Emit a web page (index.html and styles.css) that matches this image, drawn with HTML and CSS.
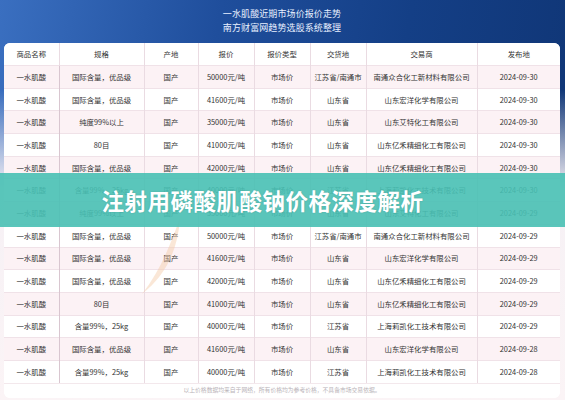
FILE: index.html
```html
<!DOCTYPE html>
<html lang="zh">
<head>
<meta charset="utf-8">
<link rel="stylesheet" href="styles.css">
</head>
<body>
<div class="page">
  <div class="title">
    <div>一水肌酸近期市场价报价走势</div>
    <div>南方财富网趋势选股系统整理</div>
  </div>
  <div class="card">
    <table class="grid">
      <colgroup>
        <col style="width:55px"><col style="width:85px"><col style="width:54px"><col style="width:56px"><col style="width:56px"><col style="width:56px"><col style="width:111px"><col style="width:83px">
      </colgroup>
      <thead>
        <tr><th>商品名称</th><th>规格</th><th>产地</th><th>报价</th><th>报价类型</th><th>交货地</th><th>交易商</th><th>发布地</th></tr>
      </thead>
      <tbody>
        <tr><td>一水肌酸</td><td>国际含量，优品级</td><td>国产</td><td>50000元/吨</td><td>市场价</td><td>江苏省/南通市</td><td>南通众合化工新材料有限公司</td><td>2024-09-30</td></tr>
        <tr><td>一水肌酸</td><td>国际含量，优品级</td><td>国产</td><td>41600元/吨</td><td>市场价</td><td>山东省</td><td>山东宏洋化学有限公司</td><td>2024-09-30</td></tr>
        <tr><td>一水肌酸</td><td>纯度99%以上</td><td>国产</td><td>35000元/吨</td><td>市场价</td><td>山东省</td><td>山东艾特化工有限公司</td><td>2024-09-30</td></tr>
        <tr><td>一水肌酸</td><td>80目</td><td>国产</td><td>41000元/吨</td><td>市场价</td><td>山东省</td><td>山东亿禾精细化工有限公司</td><td>2024-09-30</td></tr>
        <tr><td>一水肌酸</td><td>国际含量，优品级</td><td>国产</td><td>42000元/吨</td><td>市场价</td><td>山东省</td><td>山东亿禾精细化工有限公司</td><td>2024-09-30</td></tr>
        <tr><td>一水肌酸</td><td>含量99%，25kg</td><td>国产</td><td>40000元/吨</td><td>市场价</td><td>江苏省</td><td>上海莉凯化工技术有限公司</td><td>2024-09-30</td></tr>
        <tr><td>一水肌酸</td><td>纯度99%以上</td><td>国产</td><td>35000元/吨</td><td>市场价</td><td>山东省</td><td>山东艾特化工有限公司</td><td>2024-09-29</td></tr>
        <tr><td>一水肌酸</td><td>国际含量，优品级</td><td>国产</td><td>50000元/吨</td><td>市场价</td><td>江苏省/南通市</td><td>南通众合化工新材料有限公司</td><td>2024-09-29</td></tr>
        <tr><td>一水肌酸</td><td>国际含量，优品级</td><td>国产</td><td>41600元/吨</td><td>市场价</td><td>山东省</td><td>山东宏洋化学有限公司</td><td>2024-09-29</td></tr>
        <tr><td>一水肌酸</td><td>国际含量，优品级</td><td>国产</td><td>42000元/吨</td><td>市场价</td><td>山东省</td><td>山东亿禾精细化工有限公司</td><td>2024-09-29</td></tr>
        <tr><td>一水肌酸</td><td>80目</td><td>国产</td><td>41000元/吨</td><td>市场价</td><td>山东省</td><td>山东亿禾精细化工有限公司</td><td>2024-09-29</td></tr>
        <tr><td>一水肌酸</td><td>含量99%，25kg</td><td>国产</td><td>40000元/吨</td><td>市场价</td><td>江苏省</td><td>上海莉凯化工技术有限公司</td><td>2024-09-29</td></tr>
        <tr><td>一水肌酸</td><td>国际含量，优品级</td><td>国产</td><td>41600元/吨</td><td>市场价</td><td>山东省</td><td>山东宏洋化学有限公司</td><td>2024-09-28</td></tr>
        <tr><td>一水肌酸</td><td>含量99%，25kg</td><td>国产</td><td>40000元/吨</td><td>市场价</td><td>江苏省</td><td>上海莉凯化工技术有限公司</td><td>2024-09-28</td></tr>
      </tbody>
    </table>
    <p class="note">以上价格数据均来自于网络，所有价格均为参考价格，不具备市场交易依据。</p>
  </div>
  <svg class="wm-curve" width="60" height="80" viewBox="0 0 60 80"><path d="M40 2 C 30 30, 20 55, 2 78 C 25 60, 38 35, 40 2 Z" fill="#f3c9a6" opacity="0.45"/></svg>
  <div class="banner">注射用磷酸肌酸钠价格深度解析</div>
</div>
</body>
</html>
```

FILE: styles.css
```css
html, body {
  margin: 0;
  padding: 0;
}
body {
  width: 565px;
  height: 400px;
  overflow: hidden;
  font-family: "Noto Sans CJK SC", "Noto Sans", sans-serif;
  color: #333;
}
.page {
  position: relative;
  width: 565px;
  height: 400px;
  background:
    linear-gradient(180deg, rgba(255,255,255,0) 0px, rgba(255,255,255,0) 90px, #f6f1f5 190px, #fbf4f6 400px),
    linear-gradient(100deg, #3a6fc0 0%, #1f4e9c 35%, #143f86 65%, #0f3473 100%);
  padding: 0 5px 0 4px;
  box-sizing: border-box;
}
.title {
  padding-top: 7px;
  height: 43px;
  box-sizing: border-box;
  text-align: center;
  color: #e8f0ff;
  font-size: 9px;
  line-height: 14px;
  letter-spacing: 0.1px;
}
.card {
  background: #fff;
  border-radius: 6px;
  overflow: hidden;
}
.grid {
  width: 556px;
  border-collapse: collapse;
  table-layout: fixed;
  font-size: 7.4px;
  line-height: 10px;
}
.grid th, .grid td {
  height: 22.7px;
  padding: 0;
  text-align: center;
  font-weight: normal;
  border-left: 1px solid #eadbe2;
  border-top: 1px solid #f0e2e8;
  white-space: nowrap;
  overflow: hidden;
  box-sizing: border-box;
}
.grid th:first-child, .grid td:first-child {
  border-left: none;
}
.grid th {
  border-top: none;
  height: 22.5px;
  background: #fff;
  color: #333;
}
.grid tbody tr:nth-child(odd) td {
  background: #fcf2f5;
}
.grid tbody tr:nth-child(even) td {
  background: #fff;
}
.grid td:nth-child(2) {
  border-left-color: #d9c6d0;
}
.note {
  margin: 0;
  height: 14px;
  line-height: 12px;
  text-align: center;
  font-size: 5.8px;
  color: #b9b3b8;
  background: #fff;
  border-top: 1px solid #f3e8ec;
}
.wm-curve {
  position: absolute;
  left: 140px;
  top: 216px;
  pointer-events: none;
}
.banner {
  position: absolute;
  left: 0;
  top: 173px;
  width: 565px;
  height: 54px;
  box-sizing: border-box;
  padding-right: 40px;
  background: rgba(72, 192, 180, 0.9);
  color: #fff;
  font-size: 22.5px;
  font-weight: bold;
  line-height: 54px;
  text-align: center;
  letter-spacing: 0.5px;
  text-shadow: 0 0 2px rgba(0,0,0,0.15);
}
```
